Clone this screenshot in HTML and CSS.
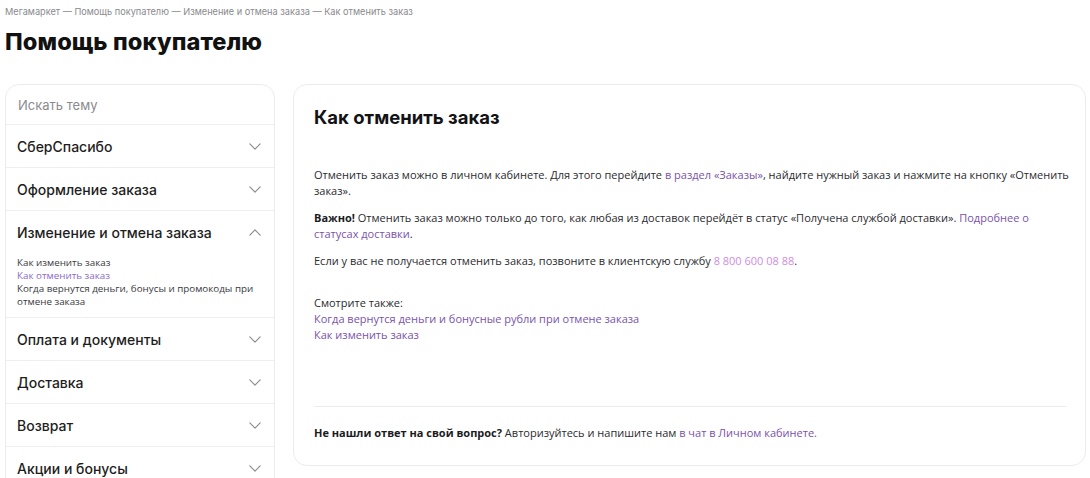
FILE: index.html
```html
<!DOCTYPE html>
<html lang="ru">
<head>
<meta charset="utf-8">
<title>Как отменить заказ</title>
<link rel="stylesheet" href="styles.css">
</head>
<body>
<div class="page">
  <nav class="crumbs">Мегамаркет — Помощь покупателю — Изменение и отмена заказа — Как отменить заказ</nav>
  <h1 class="page-title">Помощь покупателю</h1>
  <div class="layout">
    <aside class="side">
      <div class="search">Искать тему</div>
      <div class="item"><span>СберСпасибо</span><svg class="chev" viewBox="0 0 14 8"><path d="M1 1l6 6 6-6"/></svg></div>
      <div class="item"><span>Оформление заказа</span><svg class="chev" viewBox="0 0 14 8"><path d="M1 1l6 6 6-6"/></svg></div>
      <div class="item open">
        <div class="item-head"><span>Изменение и отмена заказа</span><svg class="chev" viewBox="0 0 14 8"><path d="M1 7l6-6 6 6"/></svg></div>
        <ul class="sub">
          <li>Как изменить заказ</li>
          <li class="active">Как отменить заказ</li>
          <li>Когда вернутся деньги, бонусы и промокоды при отмене заказа</li>
        </ul>
      </div>
      <div class="item"><span>Оплата и документы</span><svg class="chev" viewBox="0 0 14 8"><path d="M1 1l6 6 6-6"/></svg></div>
      <div class="item"><span>Доставка</span><svg class="chev" viewBox="0 0 14 8"><path d="M1 1l6 6 6-6"/></svg></div>
      <div class="item"><span>Возврат</span><svg class="chev" viewBox="0 0 14 8"><path d="M1 1l6 6 6-6"/></svg></div>
      <div class="item"><span>Акции и бонусы</span><svg class="chev" viewBox="0 0 14 8"><path d="M1 1l6 6 6-6"/></svg></div>
    </aside>
    <main class="article">
      <h2 class="art-title">Как отменить заказ</h2>
      <div class="body">
        <p>Отменить заказ можно в личном кабинете. Для этого перейдите <a>в раздел «Заказы»</a>, найдите нужный заказ и нажмите на кнопку «Отменить заказ».</p>
        <p><b>Важно!</b> Отменить заказ можно только до того, как любая из доставок перейдёт в статус «Получена службой доставки». <a>Подробнее о статусах доставки</a>.</p>
        <p>Если у вас не получается отменить заказ, позвоните в клиентскую службу <a class="phone">8 800 600 08 88</a>.</p>
        <p class="also">Смотрите также:<br><a>Когда вернутся деньги и бонусные рубли при отмене заказа</a><br><a>Как изменить заказ</a></p>
      </div>
      <div class="foot"><b>Не нашли ответ на свой вопрос?</b> Авторизуйтесь и напишите нам <a>в чат в Личном кабинете.</a></div>
    </main>
  </div>
</div>
</body>
</html>
```
FILE: styles.css
```css
* { box-sizing: border-box; }
html, body { margin: 0; padding: 0; background: #fff; }
body { overflow: hidden; height: 478px; font-family: Inter, "Noto Sans", sans-serif; color: #1f1f22; }
.page { padding: 5px 4px 0 5px; }
.crumbs { font-size: 9.2px; color: #8a8a8e; line-height: 14px; }
.page-title { margin: 7px 0 0; font-size: 23.6px; font-weight: 800; line-height: 32px; letter-spacing: 0.1px; color: #111; }
.layout { display: flex; gap: 18px; align-items: flex-start; margin-top: 26px; }
.side { width: 270px; flex: none; border: 1px solid #ececef; border-radius: 14px; overflow: hidden; }
.search { height: 40px; padding: 0 12px; display: flex; align-items: center; font-size: 13px; color: #8b8b8f; border-bottom: 1px solid #efeff1; }
.item { border-bottom: 1px solid #efeff1; }
.item, .item-head { height: 43px; display: flex; align-items: center; justify-content: space-between; padding: 0 12px 0 11px; font-size: 14px; font-weight: 500; color: #1e1e21; }
.item.open { height: auto; display: block; padding: 0 0 9px; }
.item.open .item-head { height: 43px; }
.chev { width: 12px; height: 7px; fill: none; stroke: #8e8e92; stroke-width: 1.4; stroke-linecap: round; stroke-linejoin: round; margin-right: 1px; }
.sub { list-style: none; margin: 2px 0 0; padding: 0 20px 0 11px; font-family: "Open Sans", sans-serif; font-size: 9.8px; line-height: 13px; color: #3a3a3e; font-weight: 400; }
.sub .active { color: #8c6ac8; }
.article { flex: 1; border: 1px solid #ececef; border-radius: 14px; padding: 20px 16px 24px 20px; height: 382px; display: flex; flex-direction: column; }
.art-title { margin: 0; font-size: 18.5px; font-weight: 700; line-height: 24px; color: #131316; }
.body { margin-top: 38px; font-family: "Open Sans", sans-serif; font-size: 11px; line-height: 16px; color: #2b2b2e; flex: 1; }
.body p { margin: 0 0 11px; }
.body p.also { margin-top: 26px; }
.body a { color: #7b53a8; }
.body a.phone { color: #cf8ee0; }
.body b { font-weight: 700; color: #1b1b1e; }
.foot { border-top: 1px solid #ececef; margin-right: 3px; padding-top: 18px; font-family: "Open Sans", sans-serif; font-size: 11px; line-height: 16px; color: #2b2b2e; }
.foot b { font-weight: 700; color: #1b1b1e; }
.foot a { color: #7b53a8; }
```
